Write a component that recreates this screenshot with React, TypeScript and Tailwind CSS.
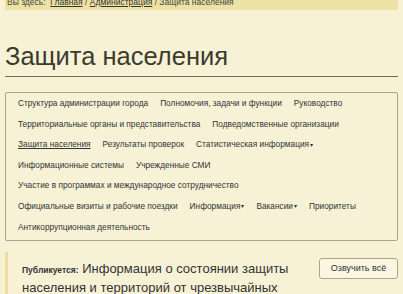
const rows: { label: string; active?: boolean; drop?: boolean }[][] = [
  [{ label: 'Структура администрации города' }, { label: 'Полномочия, задачи и функции' }, { label: 'Руководство' }],
  [{ label: 'Территориальные органы и представительства' }, { label: 'Подведомственные организации' }],
  [{ label: 'Защита населения', active: true }, { label: 'Результаты проверок' }, { label: 'Статистическая информация', drop: true }],
  [{ label: 'Информационные системы' }, { label: 'Учрежденные СМИ' }],
  [{ label: 'Участие в программах и международное сотрудничество' }],
  [{ label: 'Официальные визиты и рабочие поездки' }, { label: 'Информация', drop: true }, { label: 'Вакансии', drop: true }, { label: 'Приоритеты' }],
  [{ label: 'Антикоррупционная деятельность' }],
]

export default function App() {
  return (
    <div
      className="w-[403px] h-[294px] overflow-hidden bg-[#f7f2d6] text-[#333] px-[5px]"
      style={{ fontFamily: '"Liberation Sans", Arial, sans-serif' }}
    >
      <div className="h-[10px] overflow-hidden bg-[#ede2a3]">
        <div className="-mt-[4px] pl-[2px] text-[8.5px] leading-[12px] text-[#444]">
          Вы здесь:&nbsp; <span className="underline text-[#333]">Главная</span> /{' '}
          <span className="underline text-[#333]">Администрация</span> / Защита населения
        </div>
      </div>

      <h1 className="mt-[30px] text-[25.5px] leading-[32px] text-[#3b3a2c] pb-[4px] border-b border-[#6e6c52]">
        Защита населения
      </h1>

      <div className="mt-[15px] border border-[#a9a68a] rounded-[2px] pl-[12px] pr-2 pt-0 pb-[3px]">
        {rows.map((row, i) => (
          <div key={i} className="flex gap-[12px] h-[20.6px] items-center text-[8.3px] text-[#333]">
            {row.map((it) => (
              <span key={it.label} className={it.active ? 'underline' : ''}>
                {it.label}
                {it.drop && <span className="text-[6px] ml-[1px] align-middle">▾</span>}
              </span>
            ))}
          </div>
        ))}
      </div>

      <div className="mt-[11px] flex border-l-[3px] border-[#ece0a0] pl-[14px] pt-[2px]">
        <div className="flex-1 pt-[6px] text-[13px] leading-[18px] text-[#333]">
          <span className="text-[8.5px] font-bold">Публикуется:</span> Информация о состоянии защиты населения и
          территорий от чрезвычайных ситуаций
        </div>
        <div className="shrink-0 ml-[8px]">
          <button className="h-[21px] w-[79px] rounded-[3px] border border-[#a9a68a] bg-[#faf6e2] text-[9px] text-[#333]">
            Озвучить всё
          </button>
        </div>
      </div>
    </div>
  )
}
